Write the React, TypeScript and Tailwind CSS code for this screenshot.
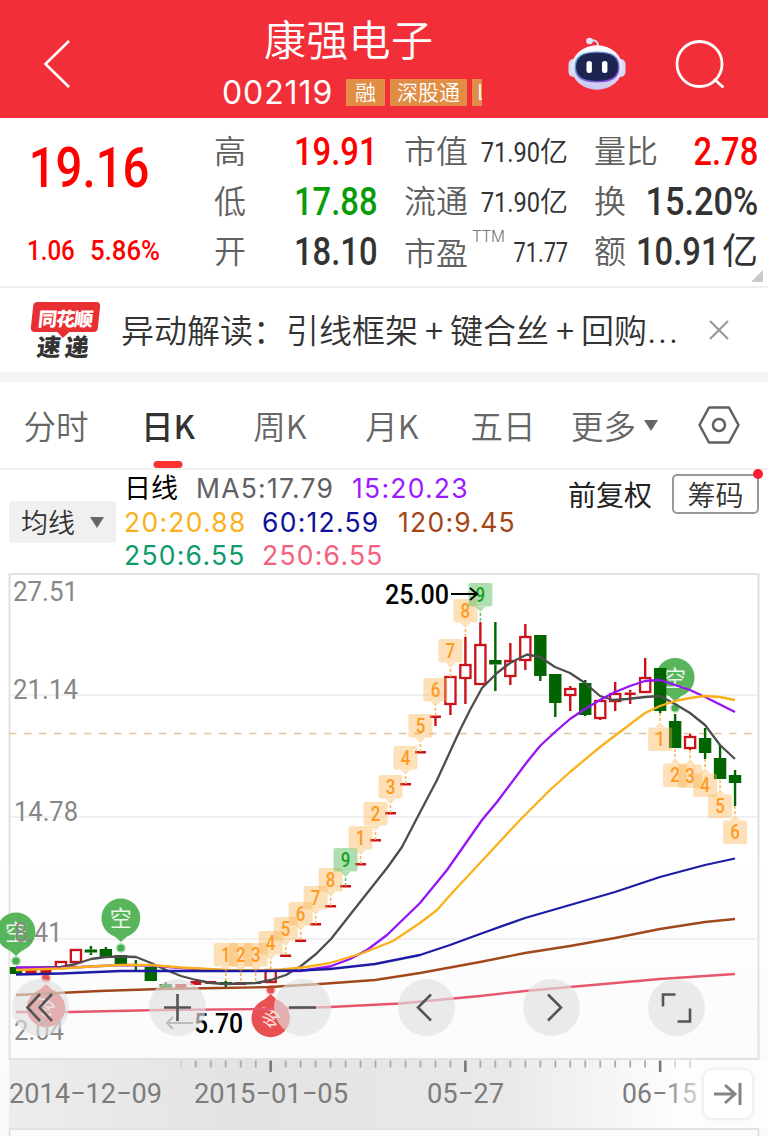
import { useState } from "react";

type Candle = {
    kind: "up" | "down" | "flat";
    top: number;
    bottom: number;
    high?: number;
    low?: number;
};

type Tag = { index: number; label: string; anchor: number; below?: boolean };

const UP = "#cc1119";
const DOWN = "#006400";

const up = (top: number, bottom: number, high?: number, low?: number): Candle => ({ kind: "up", top, bottom, high, low });
const down = (top: number, bottom: number, high?: number, low?: number): Candle => ({ kind: "down", top, bottom, high, low });
const flat = (top: number, bottom: number, high?: number, low?: number): Candle => ({ kind: "flat", top, bottom, high, low });

const candles: Candle[] = [
    down(967, 974), flat(970, 974), flat(969, 973), up(961, 969), up(949, 963),
    down(949.5, 952.5, 946, 955), down(949, 957, 947), down(955, 964), down(964, 966, 960, 971), down(967, 981),
    down(984, 988, 982), flat(984, 988), flat(981, 985), flat(981, 984), down(982, 985, 981, 988),
    flat(982, 985), flat(982, 984), up(969, 983), flat(954.5, 957), flat(939.5, 942),
    flat(923, 925.5), flat(905, 907.5), flat(885, 887.5), flat(863, 865.5), flat(839, 841.5),
    flat(812, 814.5), flat(783, 785.5), flat(751, 753.5), flat(715.5, 718, 716, 726), up(676, 705, 676, 715),
    up(664, 679, 637, 704), up(644, 685, 622, 685), down(660, 664.5, 622, 691), up(660, 677, 643, 685), up(636, 661, 624, 670),
    down(635, 676, 635, 681), down(674, 703, 674, 717), up(688, 696, 686, 711), down(683, 715, 680, 716), up(700, 719, 700, 720),
    up(693, 702, 682, 711), flat(692.5, 695, 690, 704), up(677, 693, 658, 693), down(668, 711, 668, 713), down(721, 748, 714, 748),
    up(736, 749, 734, 750), down(738, 753, 728, 759), down(758, 779, 745, 779), down(775, 783, 770, 806),
];

const tags: Tag[] = [
    { index: 14, label: "1", anchor: 981 },
    { index: 15, label: "2", anchor: 981 },
    { index: 16, label: "3", anchor: 981 },
    { index: 17, label: "4", anchor: 969 },
    { index: 18, label: "5", anchor: 955 },
    { index: 19, label: "6", anchor: 940 },
    { index: 20, label: "7", anchor: 924 },
    { index: 21, label: "8", anchor: 906 },
    { index: 22, label: "9", anchor: 886 },
    { index: 23, label: "1", anchor: 864 },
    { index: 24, label: "2", anchor: 840 },
    { index: 25, label: "3", anchor: 813 },
    { index: 26, label: "4", anchor: 784 },
    { index: 27, label: "5", anchor: 752 },
    { index: 28, label: "6", anchor: 716 },
    { index: 29, label: "7", anchor: 677 },
    { index: 30, label: "8", anchor: 637 },
    { index: 31, label: "9", anchor: 621 },
    { index: 43, label: "1", anchor: 713, below: true },
    { index: 44, label: "2", anchor: 749, below: true },
    { index: 45, label: "3", anchor: 750, below: true },
    { index: 46, label: "4", anchor: 759, below: true },
    { index: 47, label: "5", anchor: 780, below: true },
    { index: 48, label: "6", anchor: 806, below: true },
];

const averages = [
    { color: "#e8566e", points: "16,1012 70,1012 160,1010 270,1009 330,1007 400,1003.5 480,996 525,991 570,987 615,983 660,979 705,976 735,974" },
    { color: "#a0481c", points: "16,995 100,991 160,989 220,988 270,987 320,984 375,980 420,973 480,962 525,953 570,946 615,938 660,929 705,922 735,919" },
    { color: "#4d4d4d", points: "16,968 61,967 76,964 91,959 106,957 121,956.5 136,957 151,963 166,970 181,976 196,980 211,983 226,984 256,983 271,980 286,975 301,966 316,954 331,939 353,911 387,868 402,847 416,820 437,780 460,730 470,710 482,688 497,673 510,663 527,654.5 540,657 555,667 570,673 585,683 600,696 613,700 627,699 645,697 660,696 675,704 690,713 705,725 720,745 735,759" },
    { color: "#9613f5", points: "16,967.5 61,968 121,965 151,965.5 181,968 226,970.5 300,971 330,966.5 350,959 367,950 387,935 420,903 447,870 482,820 497,802 527,762 540,746 555,732 570,719 585,709 600,700 615,692 630,686 645,681 660,680 675,685 690,690 705,697 735,712" },
    { color: "#fcb01c", points: "16,970 61,968.5 91,966.5 121,965 151,965 181,967.5 226,970 270,970.5 303,967.5 330,963 363,953 393,941 420,923 437,910 453,892 480,863 520,820 550,790 570,772 600,747 645,713 660,706 675,701 690,698 705,696 720,697 735,700" },
    { color: "#1c1ca4", points: "16,974.5 61,973.5 121,971 181,971 270,971 300,970.5 330,969 375,964 420,955 450,945 480,934 525,918 570,905 615,892 660,877 705,865 735,858.5" },
];

const candleX = (i: number) => 16 + i * 14.98;

function CandleMark({ index, candle }: { index: number; candle: Candle }) {
    const x = candleX(index);
    const { kind, top, bottom, high = top, low = bottom } = candle;
    const color = kind === "down" ? DOWN : UP;

    return (
        <g stroke={color} strokeWidth={2.4}>
            {high < top && <line x1={x} x2={x} y1={high} y2={top} />}
            {low > bottom && <line x1={x} x2={x} y1={bottom} y2={low} />}
            {kind === "up" ? (
                <rect x={x - 5.1} y={top + 1} width={10.2} height={bottom - top - 2} fill="#fff" strokeWidth={2.3} />
            ) : (
                <rect
                    x={kind === "flat" ? x - 5.5 : x - 6.2}
                    y={top}
                    width={kind === "flat" ? 11 : 12.4}
                    height={bottom - top}
                    fill={color}
                    stroke="none"
                />
            )}
        </g>
    );
}

function TagMark({ index, label, anchor, below }: Tag) {
    const x = candleX(index);
    const dir = below ? 1 : -1;
    const top = below ? anchor + 14.5 : anchor - 38;
    const edge = anchor + dir * 14.5;
    const tip = anchor + dir * 9;
    const green = label === "9";
    const fill = green ? "#5fc163" : "#fbb450";

    return (
        <g>
            <line x1={x} x2={x} y1={anchor} y2={tip} stroke={fill} strokeWidth={1.5} strokeDasharray="3 2" />
            <g fill={fill} opacity={green ? 0.5 : 0.4}>
                <rect x={x - 12} y={top} width={24} height={23.5} rx={2} />
                <path d={`M${x - 5} ${edge}L${x} ${tip}L${x + 5} ${edge}Z`} />
            </g>
            <text
                x={x - 4.8}
                y={top + 18.8}
                textLength={9.6}
                lengthAdjust="spacingAndGlyphs"
                fontSize={19.5}
                fontWeight={500}
                fill={green ? "#12a01c" : "#fd9a1f"}
            >
                {label}
            </text>
        </g>
    );
}

function ShortPin({ index, y, dot }: { index: number; y: number; dot: number }) {
    const x = candleX(index);
    return (
        <g>
            <circle cx={x} cy={dot} r={5} fill="#55b65a" opacity={0.4} />
            <circle cx={x} cy={dot} r={3.6} fill="#46ae4c" />
            <circle cx={x} cy={y} r={19.4} fill="#58b55c" />
            <path d={`M${x - 10} ${y + 15}L${x} ${y + 24}L${x + 10} ${y + 15}Z`} fill="#58b55c" />
            <text x={x} y={y + 8} textAnchor="middle" fontSize={22} fill="#e9f7e9">空</text>
        </g>
    );
}

// long signals hang below the price, so the whole marker is flipped upside down
function LongPin({ index, y, dot }: { index: number; y: number; dot: number }) {
    const x = candleX(index);
    return (
        <g>
            <circle cx={x} cy={dot} r={5} fill="#ea5252" opacity={0.4} />
            <circle cx={x} cy={dot} r={3.6} fill="#ea5252" />
            <circle cx={x} cy={y} r={19.2} fill="#e95052" />
            <path d={`M${x - 10} ${y - 15}L${x} ${y - 24}L${x + 10} ${y - 15}Z`} fill="#e95052" />
            <text
                x={0}
                y={8}
                textAnchor="middle"
                fontSize={21}
                fill="#fbdcdc"
                transform={`translate(${x} ${y}) scale(1 -1)`}
            >
                多
            </text>
        </g>
    );
}

function Label({ x, y, width, fill, children }: { x: number; y: number; width: number; fill?: string; children: string }) {
    return (
        <text x={x} y={y} textLength={width} lengthAdjust="spacingAndGlyphs" fill={fill}>
            {children}
        </text>
    );
}

function KLineChart() {
    return (
        <svg
            viewBox="0 573 768 563"
            className="block h-[563px] w-full"
            fontFamily="Roboto, 'Noto Sans CJK SC', sans-serif"
        >
            <defs>
                <linearGradient id="axis" x1="0" x2="1" y1="0" y2="0">
                    <stop offset="0" stopColor="#ededed" />
                    <stop offset="0.3" stopColor="#e3e3e3" />
                    <stop offset="0.65" stopColor="#e9e9e9" />
                    <stop offset="0.88" stopColor="#fdfdfd" />
                </linearGradient>
                <linearGradient id="plot" x1="0" x2="0" y1="0" y2="1">
                    <stop offset="0.5" stopColor="#fff" />
                    <stop offset="1" stopColor="#f9f9f9" />
                </linearGradient>
                <linearGradient id="fade" gradientUnits="userSpaceOnUse" x1="660" x2="705" y1="0" y2="0">
                    <stop offset="0" stopColor="#7c7c7c" />
                    <stop offset="1" stopColor="#e4e4e4" />
                </linearGradient>
            </defs>

            <rect x={0} y={573} width={768} height={563} fill="url(#plot)" />
            <rect x={9} y={1060} width={759} height={68} fill="url(#axis)" />

            <g stroke="#ececec" strokeWidth={1.5}>
                <line x1={9} x2={759} y1={695} y2={695} />
                <line x1={9} x2={759} y1={817} y2={817} />
                <line x1={9} x2={759} y1={939} y2={939} />
            </g>
            <rect x={9.5} y={574} width={749} height={485} fill="none" stroke="#e2e2e2" strokeWidth={2} />
            <path d="M9.5 1136V1129H758.5V1136" fill="#fafafa" stroke="#dcdcdc" strokeWidth={1.5} />
            <line x1={9} x2={759} y1={733.5} y2={733.5} stroke="#e2c39c" strokeWidth={1.5} strokeDasharray="7.5 7.5" />

            <ShortPin index={0} y={932} dot={961} />
            <ShortPin index={7} y={918} dot={948} />
            <ShortPin index={44} y={677.5} dot={708} />
            <LongPin index={2} y={1008} dot={978} />
            <LongPin index={17} y={1018} dot={990} />

            {candles.map((candle, i) => (
                <CandleMark key={i} index={i} candle={candle} />
            ))}
            {averages.map((line) => (
                <polyline
                    key={line.color}
                    points={line.points}
                    fill="none"
                    stroke={line.color}
                    strokeWidth={2.3}
                    strokeLinejoin="round"
                />
            ))}
            {tags.map((tag) => (
                <TagMark key={tag.index} {...tag} />
            ))}

            <g fill="#888" fontSize={27}>
                <Label x={13} y={601} width={65}>27.51</Label>
                <Label x={13} y={699} width={65}>21.14</Label>
                <Label x={14} y={821} width={64}>14.78</Label>
                <Label x={14} y={942} width={48}>8.41</Label>
                <Label x={14} y={1040} width={50}>2.04</Label>
            </g>

            <g fill="#000" fontSize={27} fontWeight={500}>
                <Label x={385} y={603.5} width={64}>25.00</Label>
                <Label x={194} y={1033} width={49}>5.70</Label>
            </g>
            <path d="M451 594H477M470 588L477 594L470 600" fill="none" stroke="#000" strokeWidth={2} />
            <path d="M193 1023H167M173 1017L167 1023L173 1029" fill="none" stroke="#777" strokeWidth={2} />

            {Array.from({ length: 35 }, (_, i) => {
                const index = i + 11;
                const major = index === 17 || index === 30 || index === 43;
                const faded = index > 43 || index === 11;
                return (
                    <line
                        key={index}
                        x1={candleX(index)}
                        x2={candleX(index)}
                        y1={1060.5}
                        y2={major ? 1072 : 1067.5}
                        stroke={faded ? "#d3d3d3" : major ? "#777" : "#aaa"}
                        strokeWidth={major ? 2.6 : 1.8}
                    />
                );
            })}
            <g fill="#7c7c7c" fontSize={28}>
                <Label x={9} y={1102.5} width={153}>2014−12−09</Label>
                <Label x={194} y={1102.5} width={154}>2015−01−05</Label>
                <Label x={427} y={1102.5} width={77}>05−27</Label>
                <Label x={622} y={1102.5} width={75} fill="url(#fade)">06−15</Label>
            </g>
        </svg>
    );
}

function RobotIcon() {
    return (
        <svg viewBox="0 0 60 54" className="h-[54px] w-[60px]">
            <defs>
                <linearGradient id="shell" x1="0" x2="0" y1="0" y2="1">
                    <stop offset="0" stopColor="#fff" />
                    <stop offset="1" stopColor="#c9c8f0" />
                </linearGradient>
                <linearGradient id="rim" x1="0" x2="1" y1="0" y2="1">
                    <stop offset="0" stopColor="#55b8d8" />
                    <stop offset="1" stopColor="#8d32dc" />
                </linearGradient>
            </defs>
            <path d="M22 4.5C28 3.5 31 5 31 10" fill="none" stroke="#dcd8f4" strokeWidth={2} />
            <circle cx={22.5} cy={5} r={3.3} fill="#e4e0f8" />
            <rect x={1.5} y={23} width={10} height={18} rx={5} fill="#d9d9f5" />
            <rect x={48.5} y={23} width={10} height={18} rx={5} fill="#d9d9f5" />
            <ellipse cx={30} cy={31.5} rx={25.5} ry={22.3} fill="url(#shell)" />
            <path d="M30 15.5C45 15.5 52.5 20 52.5 31S45 46.5 30 46.5S7.5 42 7.5 31S15 15.5 30 15.5Z" fill="url(#rim)" />
            <path d="M30 16.8C44 16.8 51 21 51 30.8S44 45 30 45S9 40.6 9 30.8S16 16.8 30 16.8Z" fill="#1d2450" />
            <rect x={19.5} y={25} width={5.4} height={12} rx={2.5} fill="#fff" />
            <rect x={35} y={25} width={5.4} height={12} rx={2.5} fill="#fff" />
        </svg>
    );
}

function Header() {
    return (
        <header className="flex h-[118px] items-center bg-[#f22f38] text-white">
            <button type="button" className="w-[222px] pl-[43px] pt-[9px]" aria-label="返回">
                <svg viewBox="0 0 28 48" className="h-12 w-7" fill="none" stroke="currentColor" strokeWidth={2.6}>
                    <path d="M26 1L2.5 24L26 47" />
                </svg>
            </button>
            <div className="h-full w-[260px]">
                <h1 className="mt-[13px] pl-[42px] text-[42px] leading-[50px] font-[350] tracking-[0.3px] whitespace-nowrap">
                    康强电子
                </h1>
                <div className="mt-[11px] flex h-9 items-center gap-[5px] overflow-hidden text-[21px] leading-[25px] font-[350]">
                    <span className="mr-[6px] w-[113px] shrink-0 font-[Inter] text-[32px] font-normal tracking-[0.9px]">002119</span>
                    <span className="h-[27px] w-[39px] shrink-0 bg-[#e08d45] text-center">融</span>
                    <span className="h-[27px] w-[77px] shrink-0 bg-[#e08d45] text-center">深股通</span>
                    <span className="h-[27px] w-[12px] shrink-0 overflow-hidden bg-[#e08d45] pl-[5px]">L</span>
                </div>
            </div>
            <div className="ml-auto flex w-[201px] items-center justify-between pr-[43px]">
                <div className="pt-2"><RobotIcon /></div>
                <svg viewBox="0 0 50 50" className="mt-[11px] h-[50px] w-[50px]" fill="none" stroke="currentColor" strokeWidth={2.8}>
                    <circle cx={24.5} cy={24} r={22.5} />
                    <path d="M39 39L48.5 47.5" />
                </svg>
            </div>
        </header>
    );
}

function Row({ label, sup, color = "", children }: { label: string; sup?: string; color?: string; children: React.ReactNode }) {
    return (
        <div className="flex items-center justify-between whitespace-nowrap">
            <span className={`text-[32px] leading-[50px] font-[350] text-[#606060] ${sup ? "pt-1" : ""}`}>{label}</span>
            {sup && <sup className="mr-auto ml-1 self-start pt-2.5 font-[Inter] text-[15.5px] leading-4 font-light tracking-[-0.3px] text-[#777]">{sup}</sup>}
            <span className={`flex items-center justify-end leading-[50px] ${color}`}>{children}</span>
        </div>
    );
}

function Big({ children, unit }: { children: string; unit?: string }) {
    return (
        <>
            <span className={`-ml-4 inline-block origin-right text-[39px] font-medium ${children.length > 5 ? "scale-x-[0.88]" : "scale-x-[0.84]"}`}>
                {children}
            </span>
            {unit && <span className="ml-[2px] text-[36px] font-normal">{unit}</span>}
        </>
    );
}

function Small({ children, unit }: { children: string; unit?: string }) {
    return (
        <>
            <span className={`-ml-3 inline-block origin-right pt-px text-[27.5px] font-[450] ${unit ? "scale-x-[0.86]" : "scale-x-[0.79]"}`}>
                {children}
            </span>
            {unit && <span className="pt-px text-[28px] font-[350]">{unit}</span>}
        </>
    );
}

function Quote() {
    return (
        <section className="flex h-[170px] border-b-2 border-[#efefef] font-[Roboto,'Noto_Sans_CJK_SC',sans-serif] text-[#333]">
            <div className="w-[214px] pl-[27px] text-[#fe0000]">
                <div className="mt-[18px] text-[55px] leading-[64px] font-medium">
                    <span className="inline-block origin-left scale-x-[0.86] pl-0.5">19.16</span>
                </div>
                <div className="mt-[35px] flex text-[28px] leading-8 font-medium">
                    <span className="w-[63px] origin-left scale-x-[0.86]">1.06</span>
                    <span className="origin-left scale-x-[0.92]">5.86%</span>
                </div>
            </div>
            <div className="mt-[9px] grid h-[150px] w-[163px] grid-rows-3">
                <Row label="高" color="text-[#fe0000]"><Big>19.91</Big></Row>
                <Row label="低" color="text-[#089c08]"><Big>17.88</Big></Row>
                <Row label="开"><Big>18.10</Big></Row>
            </div>
            <div className="mt-[9px] ml-[27px] grid h-[150px] w-[164px] grid-rows-3">
                <Row label="市值"><Small unit="亿">71.90</Small></Row>
                <Row label="流通"><Small unit="亿">71.90</Small></Row>
                <Row label="市盈" sup="TTM"><Small>71.77</Small></Row>
            </div>
            <div className="mt-[9px] ml-[26px] grid h-[150px] w-[164px] grid-rows-3">
                <Row label="量比" color="text-[#fe0000]"><Big>2.78</Big></Row>
                <Row label="换"><Big>15.20%</Big></Row>
                <Row label="额"><Big unit="亿">10.91</Big></Row>
            </div>
            <div className="mt-auto mb-1 ml-[-7px] h-0 w-0 border-b-[12px] border-l-[12px] border-b-[#c9c9c9] border-l-transparent" />
        </section>
    );
}

function NewsBar() {
    return (
        <section className="flex h-[94px] items-center border-b-10 border-[#f3f3f3] text-[#333]">
            <div className="ml-[30px] flex w-[70px] flex-col items-center leading-none font-black">
                <div className="relative flex h-[30px] w-[67px] -skew-x-6 items-center justify-center rounded-sm bg-[#e82f31] text-[19px] tracking-[-1px] text-white">
                    同花顺
                    <span className="absolute -bottom-1 left-7 h-2.5 w-2.5 rotate-45 bg-[#e82f31]" />
                </div>
                <div className="mt-0.5 mr-1 flex -skew-x-6 gap-1 text-[24px]">
                    <span>速</span>
                    <span>递</span>
                </div>
            </div>
            <p className="ml-[21px] flex-1 text-[33px] leading-[42px] font-[350] whitespace-nowrap">
                异动解读：引线框架<span className="inline-block w-8 text-center">+</span>键合丝
                <span className="inline-block w-8 text-center">+</span>回购<span className="font-[Inter] tracking-[1.5px]">...</span>
            </p>
            <svg viewBox="0 0 20 20" className="mr-[39px] h-5 w-5" stroke="#999" strokeWidth={2.2}>
                <path d="M1 1L19 19M19 1L1 19" />
            </svg>
        </section>
    );
}

const tabs = [
    { label: "分时", className: "w-[112px]" },
    { label: "日K", className: "w-[112px]" },
    { label: "周K", className: "w-[112px]" },
    { label: "月K", className: "w-[112px]" },
    { label: "五日", className: "w-[110px]" },
];

function Tabs() {
    const [active, setActive] = useState("日K");

    return (
        <nav className="flex h-[88px] items-center border-b-2 border-[#f0f0f0] text-[32.5px] font-[350] text-[#666]">
            {tabs.map(({ label, className }) => (
                <button
                    key={label}
                    type="button"
                    onClick={() => setActive(label)}
                    className={`relative flex h-full items-center justify-center whitespace-nowrap ${className} ${active === label ? "font-medium text-[#333]" : ""}`}
                >
                    {label}
                    {active === label && (
                        <span className="absolute bottom-0 left-1/2 h-[7px] w-[29px] -translate-x-1/2 rounded-full bg-[#fb3330]" />
                    )}
                </button>
            ))}
            <button type="button" className="ml-[13px] flex items-center gap-2 whitespace-nowrap">
                更多
                <svg viewBox="0 0 14 11" className="h-[11px] w-3.5" fill="#666"><path d="M0 0H14L7 11Z" /></svg>
            </button>
            <svg viewBox="0 0 42 38" className="mr-7 ml-auto h-[38px] w-[42px]" fill="none" stroke="#606060" strokeWidth={2.5}>
                <path d="M11 1.5H31L40.5 19L31 36.5H11L1.5 19Z" strokeLinejoin="round" />
                <circle cx={21} cy={19} r={6} />
            </svg>
        </nav>
    );
}

function Legend() {
    return (
        <section className="flex h-[103px] items-start text-[26.5px]">
            <button type="button" className="mt-[31px] ml-[9px] flex h-[42px] w-[107px] items-center justify-between rounded bg-[#f0f0f0] pr-3 pl-3 text-[27px] font-[350] whitespace-nowrap text-[#333]">
                均线
                <svg viewBox="0 0 14 11" className="h-[11px] w-3.5" fill="#666"><path d="M0 0H14L7 11Z" /></svg>
            </button>
            <div className="mt-[2px] ml-[8px] w-[410px] font-[Inter,'Noto_Sans_CJK_SC',sans-serif] leading-[33.5px] tracking-[1.25px] whitespace-nowrap">
                <div className="flex">
                    <span className="w-[72px] text-[27px] tracking-normal text-black">日线</span>
                    <span className="w-[156px] text-[#606060]">MA5:17.79</span>
                    <span className="text-[#9b1bff]">15:20.23</span>
                </div>
                <div className="flex">
                    <span className="w-[138px] text-[#fcb01c]">20:20.88</span>
                    <span className="w-[136px] text-[#10109c]">60:12.59</span>
                    <span className="text-[#a34516]">120:9.45</span>
                </div>
                <div className="flex">
                    <span className="w-[138px] text-[#109b6b]">250:6.55</span>
                    <span className="text-[#f6607c]">250:6.55</span>
                </div>
            </div>
            <span className="mt-1 ml-[34px] text-[28px] leading-[40px] whitespace-nowrap text-[#222]">前复权</span>
            <button type="button" className="relative mt-[4px] ml-[20px] h-[40px] w-[87px] rounded-[5px] border-2 border-[#999] text-[28px] leading-[35px] font-[350] whitespace-nowrap text-[#333]">
                筹码
                <span className="absolute -top-[7px] -right-[6px] h-[10px] w-[10px] rounded-full bg-[#fb1c38]" />
            </button>
        </section>
    );
}

const controls = [
    { name: "first", left: "left-[12px]", d: "M28 15L15.5 28.5L28 42M40 15L27.5 28.5L40 42" },
    { name: "zoom-in", left: "left-[149px]", d: "M15 28.5H42M28.5 15V42" },
    { name: "zoom-out", left: "left-[274px]", d: "M15 28.5H42" },
    { name: "prev", left: "left-[398px]", d: "M33 15.5L20 28.5L33 41.5" },
    { name: "next", left: "left-[523px]", d: "M25 15.5L38 28.5L25 41.5" },
    { name: "fullscreen", left: "left-[648px]", d: "M15 27.5V15.5H27.5M29.5 42.5H42V29.5" },
];

export default function App() {
    return (
        <main className="h-[1136px] w-[768px] overflow-hidden bg-white font-['Noto_Sans_CJK_SC',sans-serif]">
            <Header />
            <Quote />
            <NewsBar />
            <Tabs />
            <Legend />
            <section className="relative">
                <KLineChart />
                {controls.map(({ name, left, d }) => (
                    <button
                        key={name}
                        type="button"
                        aria-label={name}
                        className={`absolute top-[406px] h-[57px] w-[57px] rounded-full bg-[#e0e0e0]/65 ${left}`}
                    >
                        <svg viewBox="0 0 57 57" className="h-full w-full" fill="none" stroke="#555" strokeWidth={2.6}>
                            <path d={d} />
                        </svg>
                    </button>
                ))}
                <button type="button" aria-label="latest" className="absolute top-[497px] left-[704px] flex h-[48px] w-[48px] items-center justify-center rounded-lg bg-white shadow-[0_0_5px_rgba(0,0,0,0.14)]">
                    <svg viewBox="0 0 28 22" className="h-[22px] w-7" fill="none" stroke="#858585" strokeWidth={3}>
                        <path d="M0 11H21M11 2L21 11L11 20M26 0V22" />
                    </svg>
                </button>
            </section>
        </main>
    );
}
